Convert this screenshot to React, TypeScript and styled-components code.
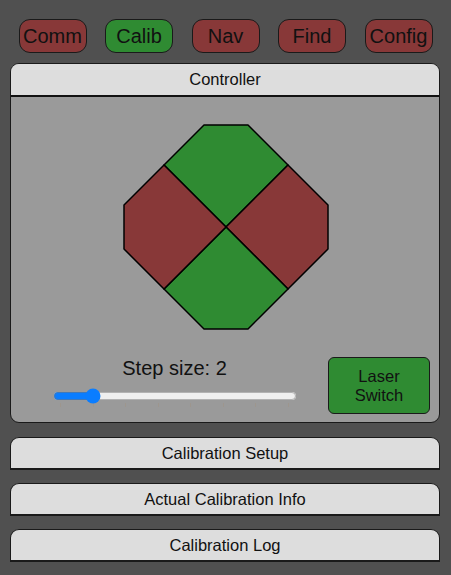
import React, { useState } from "react";
import styled, { createGlobalStyle } from "styled-components";

const Global = createGlobalStyle`
  html, body { margin: 0; padding: 0; background: #505050; }
  body { font-family: "Liberation Sans", Arial, sans-serif; color: #111; }
  * { box-sizing: border-box; }
`;

const GREEN = "#2f8b32";
const RED = "#883838";

const Page = styled.div`
  width: 451px;
  height: 575px;
  background: #505050;
  display: flex;
  flex-direction: column;
`;

const NavBar = styled.nav`
  display: flex;
  justify-content: space-evenly;
  padding-top: 19px;
  margin-bottom: 10px;
`;

const NavButton = styled.button<{ $active?: boolean }>`
  width: 68px;
  height: 34px;
  border: 1px solid #1a1a1a;
  border-radius: 11px;
  background: ${(p) => (p.$active ? GREEN : RED)};
  color: #111;
  font-family: "Liberation Sans", Arial, sans-serif;
  font-size: 20px;
  padding: 0;
  display: flex;
  align-items: center;
  justify-content: center;
  white-space: nowrap;
  overflow: visible;
`;

const Content = styled.div`
  display: flex;
  flex-direction: column;
  gap: 13px;
  padding: 0 11px 0 10px;
`;

const Panel = styled.section`
  border: 1px solid #1a1a1a;
  border-radius: 9px;
  overflow: hidden;
  background: #9a9a9a;
  margin-bottom: 1px;
`;

const PanelHeader = styled.div`
  height: 33px;
  background: #dddddd;
  border-bottom: 2px solid #111;
  display: flex;
  align-items: center;
  justify-content: center;
  font-size: 16.5px;
`;

const PanelBody = styled.div`
  padding: 28px 0 8px;
  display: flex;
  flex-direction: column;
  align-items: center;
  gap: 28px;
`;

const Pad = styled.svg`
  display: block;
  width: 206px;
  height: 206px;
  margin-left: 1px;
  margin-top: -1px;
  margin-bottom: -1px;
`;

const BottomRow = styled.div`
  align-self: stretch;
  display: flex;
  gap: 10px;
  padding: 0 9px 0 20px;
`;

const StepColumn = styled.div`
  flex: 1;
  display: flex;
  flex-direction: column;
  align-items: center;
  gap: 3px;
`;

const StepLabel = styled.div`
  font-size: 20px;
  line-height: 23px;
`;

const Slider = styled.input`
  width: 244px;
  margin: 2px 0;
  accent-color: #0a7dff;
`;

const LaserButton = styled.button`
  width: 102px;
  height: 57px;
  background: ${GREEN};
  border: 1px solid #1a1a1a;
  border-radius: 6px;
  font-family: "Liberation Sans", Arial, sans-serif;
  font-size: 16.5px;
  line-height: 19px;
  color: #111;
  padding: 0;
`;

const Section = styled.div`
  height: 33px;
  background: #dddddd;
  border: 1px solid #1a1a1a;
  border-bottom-width: 2px;
  border-radius: 9px 9px 0 0;
  display: flex;
  align-items: center;
  justify-content: center;
  font-size: 16.5px;
`;

const pieces: { pts: string; color: string }[] = [
  { pts: "80,0 124,0 164,40 102,102 40,40", color: GREEN },
  { pts: "164,40 204,80 204,124 164,164 102,102", color: RED },
  { pts: "164,164 124,204 80,204 40,164 102,102", color: GREEN },
  { pts: "40,164 0,124 0,80 40,40 102,102", color: RED },
];

export default function App() {
  const [step, setStep] = useState(2);
  const tabs = ["Comm", "Calib", "Nav", "Find", "Config"];
  return (
    <Page>
      <Global />
      <NavBar>
        {tabs.map((t) => (
          <NavButton key={t} $active={t === "Calib"}>
            {t}
          </NavButton>
        ))}
      </NavBar>
      <Content>
        <Panel>
          <PanelHeader>Controller</PanelHeader>
          <PanelBody>
            <Pad viewBox="-1 -1 206 206">
              {pieces.map((p, i) => (
                <polygon
                  key={i}
                  points={p.pts}
                  fill={p.color}
                  stroke="#000"
                  strokeWidth={1.5}
                  strokeLinejoin="round"
                />
              ))}
            </Pad>
            <BottomRow>
              <StepColumn>
                <StepLabel>Step size: {step}</StepLabel>
                <Slider
                  type="range"
                  min={1}
                  max={8}
                  step={1}
                  value={step}
                  list="steps"
                  onChange={(e) => setStep(Number(e.target.value))}
                />
                <datalist id="steps">
                  {[1, 2, 3, 4, 5, 6, 7, 8].map((v) => (
                    <option key={v} value={v} />
                  ))}
                </datalist>
              </StepColumn>
              <LaserButton>
                Laser
                <br />
                Switch
              </LaserButton>
            </BottomRow>
          </PanelBody>
        </Panel>
        <Section>Calibration Setup</Section>
        <Section>Actual Calibration Info</Section>
        <Section>Calibration Log</Section>
      </Content>
    </Page>
  );
}
